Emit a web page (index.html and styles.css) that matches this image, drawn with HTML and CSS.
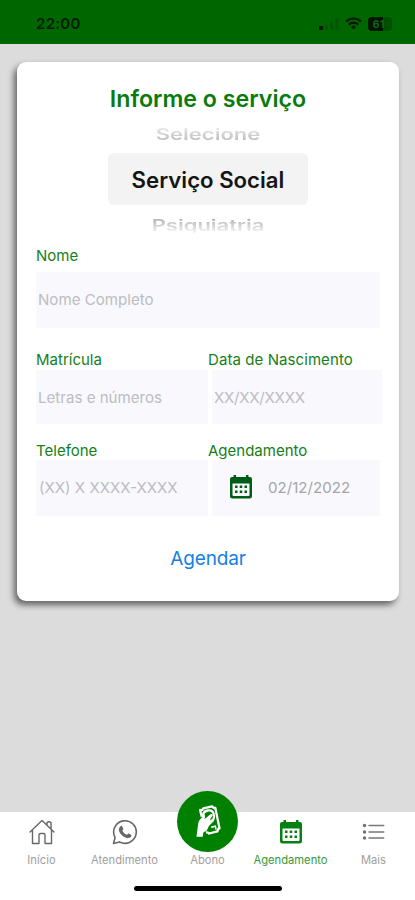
FILE: index.html
```html
<!DOCTYPE html>
<html lang="pt-BR">
<head>
<meta charset="utf-8">
<meta name="viewport" content="width=device-width, initial-scale=1">
<title>Agendamento</title>
<link rel="stylesheet" href="styles.css">
</head>
<body>
<svg class="defs" width="0" height="0">
  <symbol id="calendar" viewBox="0 0 22 24">
    <path fill-rule="evenodd" d="M3.500 2V.8a1.300 1.300 0 0 1 2.600 0V2h9.800V.8a1.300 1.300 0 0 1 2.600 0V2H20a2 2 0 0 1 2 2v17a2.500 2.500 0 0 1-2.500 2.500h-17A2.500 2.500 0 0 1 0 21V4a2 2 0 0 1 2-2zM2.500 8.500V20a1 1 0 0 0 1 1h15a1 1 0 0 0 1-1V8.500z"/>
    <path d="M5 10.500h2.500V13H5zm4.750 0h2.500V13h-2.500zm4.750 0H17V13h-2.500zM5 15.500h2.500V18H5zm4.750 0h2.500V18h-2.500zm4.750 0H17V18h-2.500z"/>
  </symbol>
</svg>
<div class="screen">
  <header class="status">
    <span class="time">22:00</span>
    <div class="indicators">
      <svg class="signal" width="20" height="12" viewBox="0 0 20 12"><rect y="8" width="4" height="4" rx="1"/><g opacity=".16"><rect x="5.500" y="6" width="3.500" height="6" rx="1"/><rect x="11" y="3" width="3.500" height="9" rx="1"/><rect x="16" width="3.500" height="12" rx="1"/></g></svg>
      <svg class="wifi" width="17" height="13" viewBox="0 0 17 13" fill="none" stroke="#001b00" stroke-width="2.200"><path d="M1 4.600a10.600 10.600 0 0 1 15 0M3.700 7.700a6.800 6.800 0 0 1 9.600 0"/><path d="M8.500 12.500L6 9.900a3.500 3.500 0 0 1 5 0z" fill="#001b00" stroke="none"/></svg>
      <span class="battery"><span class="charge">61</span></span>
    </div>
  </header>
  <main class="content">
    <form class="card">
      <h1 class="title"><span>Informe o serviço</span></h1>
      <div class="picker">
        <div class="option previous"><span>Selecione</span></div>
        <div class="option selected"><span>Serviço Social</span></div>
        <div class="option next"><span>Psiquiatria</span></div>
      </div>
      <div class="group name">
        <label class="label nome">Nome</label>
        <div class="field"><span>Nome Completo</span></div>
      </div>
      <div class="row first">
        <div class="group"><label class="label">Matrícula</label><div class="field"><span>Letras e números</span></div></div>
        <div class="group right"><label class="label nascimento">Data de Nascimento</label><div class="field"><span class="ph-date">XX/XX/XXXX</span></div></div>
      </div>
      <div class="row second">
        <div class="group"><label class="label">Telefone</label><div class="field"><span class="ph-tel">(XX) X XXXX-XXXX</span></div></div>
        <div class="group right"><label class="label">Agendamento</label><div class="field date"><svg class="cal" width="22" height="24"><use href="#calendar"/></svg><span>02/12/2022</span></div></div>
      </div>
      <div class="action"><span>Agendar</span></div>
    </form>
  </main>
  <nav class="tabs">
    <div class="tab">
      <svg class="icon" width="26" height="26" viewBox="0 0 26 26" fill="none" stroke="#686868" stroke-width="1.400" stroke-linejoin="round" stroke-linecap="round"><path d="M1 13L13 1.500 25 13M3.500 11v13.500H10V16q0-1.500 1.500-1.500h3q1.500 0 1.500 1.500v8.500h6.500V11M18 6V3.500q2-1.500 4 0V10"/></svg>
      <span class="t-inicio">Início</span>
    </div>
    <div class="tab">
      <svg class="icon" width="26" height="26" viewBox="0 0 26 26"><path fill="none" stroke="#686868" stroke-width="1.600" stroke-linejoin="round" d="M1.500 24.500l1.600-6A11.300 11.300 0 1 1 7.500 22.900z"/><path fill="#686868" d="M8.600 7.200c.5-.5 1.300-.5 1.600.1l1.100 2.500c.2.500-.9 1.500-.9 1.900 1.100 2 2.300 3.100 4.300 4 .5.100 1.300-1.500 1.900-1.300l2.600 1.300c.5.300.1 1.700-.4 2.300-1.400 1.400-3.300 1.300-5.300.5-3-1.200-5.300-3.700-6.300-6.100-.8-2-.1-4 1.400-5.200z"/></svg>
      <span>Atendimento</span>
    </div>
    <div class="tab">
      <div class="icon"><div class="fab">
        <svg width="38" height="46" viewBox="0 0 36 44"><path fill="none" stroke="#fff" stroke-width="2.200" stroke-linejoin="round" d="M12 17L10.500 10.500Q13 11 13.500 9L22 7Q23 9 25 8.500L29 28Q27 28.500 27 31L19 33Q18 31.500 16 32"/><path fill="none" stroke="#fff" stroke-width="2.200" d="M13.500 17.500q-1-5.500 4-6.500t6 3.500q1 4-1.500 6"/><path fill="#fff" d="M7 36l1.500-11.500Q9 20 12 18l1.500-3.500q1.800-.2 1.500 3l-.4 1.800 5.700-4.600q2-.8 2.200 1l-3 4.300 2.800-.7q1.800.2 1.200 2L19 25.500l-2 4.500-3.500 2L13 36z"/><path fill="none" stroke="#fff" stroke-width="1.600" d="M21 27l4-1 .6 3"/></svg>
      </div></div>
      <span>Abono</span>
    </div>
    <div class="tab active">
      <div class="icon"><svg width="22" height="24" class="cal"><use href="#calendar"/></svg></div>
      <span>Agendamento</span>
    </div>
    <div class="tab">
      <svg class="icon" width="26" height="26" viewBox="0 0 26 26"><g fill="#707070"><circle cx="3.500" cy="6.500" r="1.700"/><circle cx="3.500" cy="13" r="1.700"/><circle cx="3.500" cy="19" r="1.700"/></g><path d="M8 6.500h14.700M8 13h14.700M8 19h14.700" stroke="#777" stroke-width="1.500" stroke-linecap="round"/></svg>
      <span>Mais</span>
    </div>
  </nav>
  <footer class="home"><div class="home-bar"></div></footer>
</div>
</body>
</html>
```
FILE: styles.css
```css
* { box-sizing: border-box; }
body { margin: 0; font-family: Inter, "Liberation Sans", sans-serif; }
.defs { display: block; }
.screen { width: 415px; height: 900px; display: flex; flex-direction: column; background: #dcdcdc; overflow: hidden; }
.status { height: 44px; flex: none; display: flex; justify-content: space-between; align-items: center; background: #006600; padding: 3px 23px 0 36px; }
.time { font-size: 15px; font-weight: 600; letter-spacing: .3px; color: #001d00; }
.indicators { display: flex; align-items: center; gap: 6px; }
.signal { fill: #001500; }
.battery { width: 24px; height: 14px; border-radius: 4px; background: linear-gradient(90deg, #001700 62%, #005000 62%); }
.charge { display: block; width: 21px; text-align: center; font-size: 11px; line-height: 14px; font-weight: 700; color: #176017; }
.content { height: 768px; flex: none; padding: 18px 16px 0 17px; }
.card { height: 539px; background: #fff; border-radius: 9px; padding: 21px 17px 0 19px; box-shadow: -3px 4px 6px rgba(0,0,0,.55); }
.title { margin: 0 2px 0 0; height: 32px; line-height: 32px; text-align: center; font-size: 23.200px; font-weight: 600; color: #087c0c; }
.picker { width: 200px; height: 118px; margin: 0 auto; position: relative; left: -1px; text-align: center; }
.option { white-space: nowrap; }
.option span { display: inline-block; }
.previous { height: 38px; font-size: 22px; line-height: 39px; font-weight: 600; }
.previous span { transform: scaleY(.7); }
.selected { height: 52px; line-height: 53px; border-radius: 6px; background: #f3f3f3; color: #151515; font-size: 22.200px; font-weight: 600; }
.next { height: 27px; font-size: 22px; line-height: 41px; font-weight: 600; }
.next span { transform: scaleY(.7); }
.previous span, .next span { background: linear-gradient(#e8e8e8 25%, #bbb 75%); background-clip: text; color: transparent; }
.next span { background-image: linear-gradient(#b8b8b8 30%, #f4f4f4 74%, #fff 78%); }
.name { margin-top: 12px; width: 344px; }
.label { display: block; height: 20px; line-height: 21px; font-size: 15px; color: #158019; white-space: nowrap; }
.nome { height: 27px; line-height: 22px; }
.first .label { line-height: 19px; }
.nascimento { letter-spacing: .08px; }
.field { height: 56px; display: flex; align-items: center; padding: 0 0 1px 2px; background: #f8f8fd; color: #bdbdc1; font-size: 15.100px; white-space: nowrap; }
.row { display: grid; grid-template-columns: 172px 174px; }
.first { margin-top: 22px; }
.first .field { height: 54px; padding-bottom: 0; }
.second { margin-top: 16px; }
.right .field { margin-left: 4px; }
.second .right .field { margin-right: 2px; }
.cal { fill: #005d17; overflow: visible; }
.second .date { padding-left: 18px; gap: 16px; color: #a6a6aa; }
.date .cal { margin-top: -2px; }
.ph-tel { margin-left: 1px; }
.ph-date { letter-spacing: -.25px; }
.action { margin: 28px 2px 0 0; height: 30px; line-height: 30px; text-align: center; color: #167ee5; font-size: 19px; letter-spacing: -.15px; }
.tabs { height: 60px; flex: none; display: grid; grid-template-columns: repeat(5, 83px); background: #fff; }
.tab { display: flex; flex-direction: column; align-items: center; padding-top: 7px; color: #a0a0a0; font-size: 11.200px; line-height: 16px; white-space: nowrap; }
.t-inicio { letter-spacing: .1px; }
.icon { width: 26px; height: 26px; margin-bottom: 7px; display: flex; justify-content: center; align-items: center; }
.fab { width: 61px; height: 61px; flex: none; margin-top: -21px; border-radius: 50%; background: #008000; display: flex; align-items: center; justify-content: center; }
.active { color: #39983c; }
.active .cal { fill: #078013; }
.home { height: 28px; flex: none; background: #fff; padding: 14px 0 0 134px; }
.home-bar { width: 148px; height: 5px; border-radius: 3px; background: #000; }
```
